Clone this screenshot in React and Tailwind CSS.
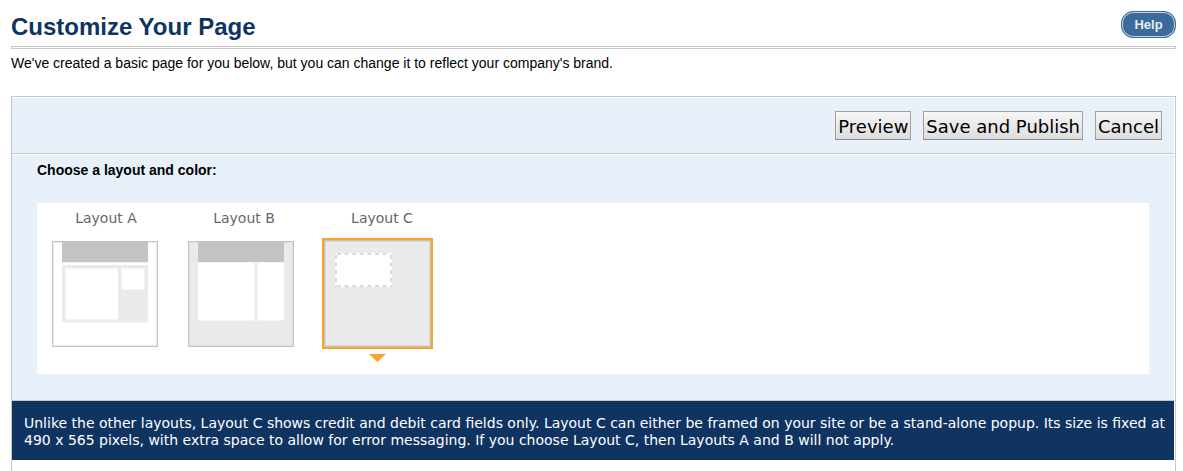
import React, { useState } from "react";

function ThumbA() {
  return (
    <svg viewBox="0 0 106 106" className="block size-[106px]" shapeRendering="crispEdges" aria-hidden="true">
      <rect width="106" height="106" fill="#c4c4c4" />
      <rect x="1" y="1" width="104" height="104" fill="#ececec" />
      <rect x="2" y="2" width="102" height="102" fill="#fff" />
      <rect x="10" y="1" width="86" height="20" fill="#c3c3c3" />
      <rect x="10" y="21" width="86" height="1" fill="#f0f0f0" />
      <rect x="10" y="24" width="86" height="57" fill="#eaeaea" />
      <rect x="10" y="81" width="86" height="1" fill="#f4f4f4" />
      <rect x="13" y="27" width="53" height="52" fill="#f4f4f4" />
      <rect x="14" y="28" width="52" height="50" fill="#fff" />
      <rect x="69" y="27" width="24" height="22" fill="#f4f4f4" />
      <rect x="70" y="28" width="22" height="20" fill="#fff" />
    </svg>
  );
}

function ThumbB() {
  return (
    <svg viewBox="0 0 106 106" className="block size-[106px]" shapeRendering="crispEdges" aria-hidden="true">
      <rect width="106" height="106" fill="#c4c4c4" />
      <rect x="1" y="1" width="104" height="104" fill="#dfdfdf" />
      <rect x="2" y="2" width="102" height="102" fill="#eaeaea" />
      <rect x="10" y="1" width="86" height="20" fill="#c3c3c3" />
      <rect x="10" y="21" width="56" height="59" fill="#f4f4f4" />
      <rect x="10" y="22" width="56" height="57" fill="#fff" />
      <rect x="66" y="21" width="4" height="59" fill="#efefef" />
      <rect x="70" y="21" width="26" height="59" fill="#f4f4f4" />
      <rect x="70" y="22" width="26" height="57" fill="#fff" />
    </svg>
  );
}

function ThumbC() {
  return (
    <svg viewBox="0 0 107 107" className="block size-[107px]" shapeRendering="crispEdges" aria-hidden="true">
      <rect width="107" height="107" fill="#c4c4c4" />
      <rect x="1" y="1" width="105" height="105" fill="#d9d9d9" />
      <rect x="2" y="2" width="103" height="103" fill="#eaeaea" />
      <rect x="11" y="13" width="57" height="34" fill="#fff" />
      <path
        d="M11 14H67M11 46H67M12 13V47M67 13V47"
        transform="translate(0 0)"
        fill="none"
        stroke="#d0d0d0"
        strokeWidth="1.5"
        strokeDasharray="4 3.6"
        strokeDashoffset="-2"
        shapeRendering="auto"
      />
    </svg>
  );
}

const layouts = [
  { id: "A", name: "Layout A", Thumb: ThumbA },
  { id: "B", name: "Layout B", Thumb: ThumbB },
  { id: "C", name: "Layout C", Thumb: ThumbC },
];

function ToolButton({ children }) {
  return (
    <button
      type="button"
      className="h-[29px] border border-[#a0a0a0] border-b-[#8c8c8c] bg-linear-to-b from-[#f6f6f6] to-[#dddddd] px-0.5 pt-0.5 text-lg leading-6 text-black"
    >
      {children}
    </button>
  );
}

export default function App() {
  const [selected, setSelected] = useState("C");
  return (
    <main className="flex min-h-screen flex-col bg-white pr-[7px] pl-[11px] font-['DejaVu_Sans',Verdana,sans-serif] text-black">
      <header className="flex h-[46px] items-start justify-between pt-[11px] font-['Liberation_Sans',Arial,sans-serif]">
        <h1 className="pt-0.5 text-2xl leading-7 font-bold text-[#0f3462]">Customize Your Page</h1>
        <button
          type="button"
          className="h-[27px] w-[55px] rounded-[12px] border border-[#3c6a9a] bg-[#3c6a9a] text-[13px] leading-5 font-bold text-[#e4edf5] inset-ring inset-ring-[#c3d3e2]"
        >
          Help
        </button>
      </header>
      <hr className="h-[3px] border border-[#c8c8c8]" />
      <p className="pt-1 font-['Liberation_Sans',Arial,sans-serif] text-sm leading-5">
        We've created a basic page for you below, but you can change it to reflect your company's brand.
      </p>

      <section className="mt-[23px] flex flex-1 flex-col border border-b-0 border-[#c8c8c8] pt-px pr-px">
        <div className="flex h-14 items-start justify-end gap-3 border-b border-[#c8c8c8] bg-[#e8f0fa] pt-[13px] pr-3">
          <ToolButton>Preview</ToolButton>
          <ToolButton>Save and Publish</ToolButton>
          <ToolButton>Cancel</ToolButton>
        </div>

        <div className="mt-px border-b border-[#c8c8c8] bg-[#e8f0fa] px-[25px] pt-[5px] pb-[26px]">
          <h2 className="font-['Liberation_Sans',Arial,sans-serif] text-sm leading-5 font-bold">
            Choose a layout and color:
          </h2>
          <div className="mt-[23px] h-[171px] bg-white pt-[5px]">
            <div className="flex text-center text-sm leading-5 text-[#666666]">
              {layouts.map(({ id, name }) => (
                <label key={id} htmlFor={`layout-${id}`} className="w-[138px] cursor-pointer">
                  {name}
                </label>
              ))}
            </div>
            <div className="mt-[10px] flex gap-[25px] pl-[13px]">
              {layouts.map(({ id, name, Thumb }) => (
                <label key={id} className="flex cursor-pointer flex-col items-center">
                  <input
                    id={`layout-${id}`}
                    type="radio"
                    name="layout"
                    value={id}
                    aria-label={name}
                    checked={selected === id}
                    onChange={() => setSelected(id)}
                    className="sr-only"
                  />
                  <span
                    className={
                      selected === id
                        ? "flex size-[111px] items-center justify-center border-2 border-[#f9a32b]"
                        : "flex h-[111px] w-[111px] items-center border-2 border-transparent"
                    }
                  >
                    <Thumb />
                  </span>
                  {selected === id && (
                    <svg viewBox="0 0 17 8" className="mt-[5px] h-2 w-[17px]" aria-hidden="true">
                      <path d="M0 0H17L8.5 8Z" fill="#f9a32b" />
                    </svg>
                  )}
                </label>
              ))}
            </div>
          </div>
        </div>

        <p className="bg-[#0f3462] pt-[14px] pr-1 pb-[11px] pl-3 text-sm leading-[17px] text-white">
          Unlike the other layouts, Layout C shows credit and debit card fields only. Layout C can either be framed on
          your site or be a stand-alone popup. Its size is fixed at 490 x 565 pixels, with extra space to allow for
          error messaging. If you choose Layout C, then Layouts A and B will not apply.
        </p>
      </section>
    </main>
  );
}
